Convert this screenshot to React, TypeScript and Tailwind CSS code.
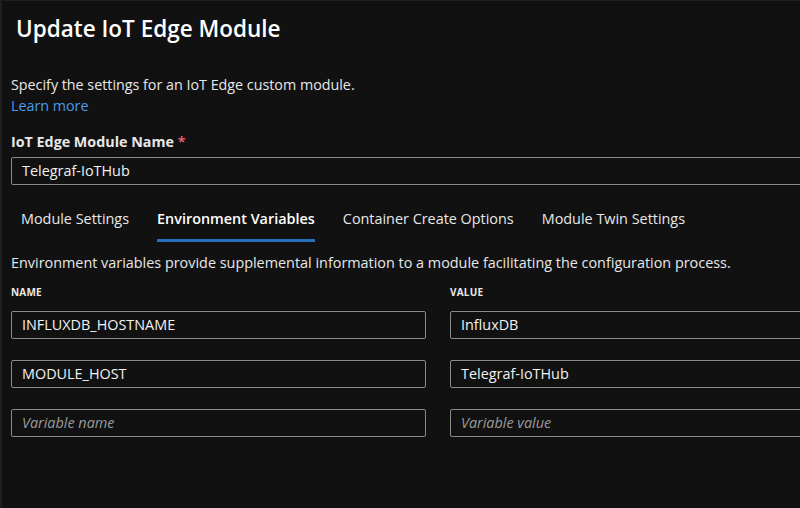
import React from "react";

const font = { fontFamily: '"Open Sans", "Noto Sans", sans-serif' };

function Field({ value, placeholder, className }: { value?: string; placeholder?: string; className?: string }) {
  return (
    <div
      className={
        "h-[28px] border border-[#8a8a8a] rounded-[2px] flex items-center px-[10px] text-[14.4px] " +
        (className || "")
      }
    >
      {value ? (
        <span className="text-[#f2f2f2]">{value}</span>
      ) : (
        <span className="text-[#9b9b9b] italic">{placeholder}</span>
      )}
    </div>
  );
}

export default function App() {
  const tabs = ["Module Settings", "Environment Variables", "Container Create Options", "Module Twin Settings"];
  const rows = [
    ["INFLUXDB_HOSTNAME", "InfluxDB"],
    ["MODULE_HOST", "Telegraf-IoTHub"],
    ["", ""],
  ];
  return (
    <div
      className="w-[800px] h-[508px] overflow-hidden bg-[#111111] border-l-2 border-t border-[#1f1f1f] text-[#e8e8e8]"
      style={font}
    >
      <div className="w-[900px] pl-[9px]">
        <h1 className="pl-[5px] pt-[12px] text-[22.5px] leading-[32px] font-semibold text-white">Update IoT Edge Module</h1>
        <p className="mt-[29px] text-[14.3px] leading-[21px]">Specify the settings for an IoT Edge custom module.</p>
        <p className="text-[14.3px] leading-[21px] text-[#4a9ae8]">Learn more</p>
        <div className="mt-[16px] text-[14.3px] leading-[20px] font-bold">
          IoT Edge Module Name <span className="text-[#e05a6a]">*</span>
        </div>
        <Field value="Telegraf-IoTHub" className="mt-[5px] w-[880px]" />
        <div className="mt-[24px] flex pl-[10px] gap-[28px] text-[14.4px]">
          {tabs.map((t) => (
            <div key={t} className="flex flex-col">
              <span className={"leading-[20px] " + (t === "Environment Variables" ? "font-semibold text-white" : "text-[#e8e8e8]")}>
                {t}
              </span>
              <div className={"mt-[10px] h-[3px] " + (t === "Environment Variables" ? "bg-[#2b6fc0]" : "bg-transparent")} />
            </div>
          ))}
        </div>
        <p className="mt-[11px] text-[14.4px] leading-[20px]">
          Environment variables provide supplemental information to a module facilitating the configuration process.
        </p>
        <div className="mt-[12px] grid grid-cols-[415px_415px] gap-x-[24px]">
          <div className="text-[10px] font-bold leading-[14px] tracking-[0.2px]">NAME</div>
          <div className="text-[10px] font-bold leading-[14px] tracking-[0.2px]">VALUE</div>
        </div>
        <div className="mt-[12px] flex flex-col gap-[21px]">
          {rows.map(([n, v], i) => (
            <div key={i} className="grid grid-cols-[415px_415px] gap-x-[24px]">
              <Field value={n} placeholder="Variable name" />
              <Field value={v} placeholder="Variable value" />
            </div>
          ))}
        </div>
      </div>
    </div>
  );
}
